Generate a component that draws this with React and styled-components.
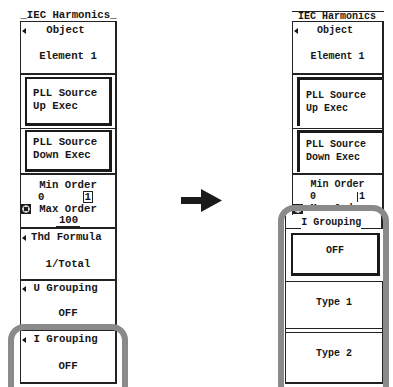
import React from "react";
import styled, { createGlobalStyle, css } from "styled-components";

const GlobalStyle = createGlobalStyle`
  html, body {
    margin: 0;
    background: #fff;
  }
  body {
    font-family: "Liberation Mono", "DejaVu Sans Mono", monospace;
    color: #161616;
  }
`;

const Stage = styled.div`
  position: relative;
  display: flex;
  align-items: flex-start;
  width: 393px;
  height: 387px;
  padding: 9px 0 0 20px;
  box-sizing: border-box;
  overflow: hidden;
`;

const Column = styled.div`
  position: relative;
  flex-shrink: 0;
  width: ${(p) => p.$width}px;
  margin-left: ${(p) => p.$offset || 0}px;
`;

const Panel = styled.div`
  display: flex;
  flex-direction: column;
  width: ${(p) => p.$width}px;
  margin-left: ${(p) => p.$inset || 0}px;
  font-size: ${(p) => p.$font}px;
  font-weight: bold;
`;

const PanelTitle = styled.div`
  box-sizing: border-box;
  height: ${(p) => (p.$boxed ? 10 : 12)}px;
  margin-top: ${(p) => (p.$boxed ? 2 : 0)}px;
  border-top: ${(p) => (p.$boxed ? "1px solid #222" : "none")};
  line-height: ${(p) => (p.$boxed ? 10 : 12)}px;
  text-align: ${(p) => (p.$boxed ? "right" : "center")};
  padding-right: ${(p) => (p.$boxed ? 8 : 0)}px;
  white-space: pre;
`;

const Section = styled.div`
  box-sizing: border-box;
  display: flex;
  flex-direction: column;
  height: ${(p) => p.$h}px;
  padding: ${(p) => p.$pad || "3px 0 0"};
  border-left: 1px solid #222;
  border-right: 2px solid #222;
  border-top: ${(p) => (p.$top ? "1px solid #222" : "none")};
  border-bottom: ${(p) => p.$bottom ?? 2}px solid #222;
`;

const LabelRow = styled.div`
  display: flex;
  align-items: center;
  height: 11px;
  line-height: 11px;
`;

const Caret = styled.span`
  display: flex;
  align-items: center;
  flex-shrink: 0;
  width: 10px;
  height: 11px;
  &::before {
    content: "";
    margin-left: 1px;
    border-top: 3.5px solid transparent;
    border-bottom: 3.5px solid transparent;
    border-right: 4px solid #161616;
  }
`;

const LabelText = styled.span`
  flex: 1;
  text-align: center;
  padding-right: 15px;
  white-space: pre;
`;

const Value = styled.div`
  margin-top: ${(p) => p.$gap}px;
  line-height: 11px;
  text-align: center;
  white-space: pre;
`;

const ExecButton = styled.div`
  flex: 1;
  box-sizing: border-box;
  display: flex;
  flex-direction: column;
  justify-content: center;
  padding: 0 0 3px 6px;
  line-height: 13px;
  white-space: pre;
  ${(p) =>
    p.$raised
      ? css`
          border-top: 3px solid #1a1a1a;
          border-left: 3px solid #1a1a1a;
          margin-right: -3px;
        `
      : css`
          border: 2px solid #1a1a1a;
          border-right-width: 3px;
          border-bottom-width: 3px;
        `}
`;

const OrderRow = styled.div`
  display: flex;
  align-items: center;
  height: 12.5px;
  line-height: 12px;
  justify-content: ${(p) => (p.$spread ? "space-between" : "center")};
  padding: ${(p) => p.$pad || "0"};
`;

const OrderText = styled.span`
  flex: 1;
  text-align: center;
  padding-right: ${(p) => p.$shift || 0}px;
`;

const Cursor = styled.span`
  line-height: 10px;
  padding: 0 1px;
  border-left: 1px solid #222;
  border-right: ${(p) => (p.$open ? "none" : "1px solid #222")};
  border-top: ${(p) => (p.$open ? "none" : "1px solid #222")};
  border-bottom: ${(p) => (p.$open ? "none" : "1px solid #222")};
`;

const Underlined = styled.span`
  border-bottom: 1px solid #222;
  padding: 0 2px 0 3px;
  line-height: 11px;
`;

const Popup = styled.div`
  position: absolute;
  left: 0;
  top: 206px;
  width: 100px;
  display: flex;
  flex-direction: column;
  background: #fff;
  font-size: 10px;
  font-weight: bold;
`;

const PopupTitle = styled.div`
  display: flex;
  align-items: flex-end;
  height: 14px;
  line-height: 12px;
  white-space: pre;
`;

const Rule = styled.span`
  flex: ${(p) => p.$grow};
  align-self: stretch;
  border-bottom: 1px solid #222;
  border-left: ${(p) => (p.$edge === "left" ? "1px solid #222" : "none")};
  border-right: ${(p) => (p.$edge === "right" ? "2px solid #222" : "none")};
  margin-right: ${(p) => (p.$edge === "right" ? 2 : 0)}px;
`;

const Option = styled.div`
  box-sizing: border-box;
  display: flex;
  flex-direction: column;
  height: ${(p) => p.$h}px;
  padding: ${(p) => p.$pad || "0"};
  border-left: 1px solid #222;
  border-right: ${(p) => (p.$thick ? 3 : 1)}px solid #222;
  border-bottom: ${(p) => p.$bottom ?? 2}px solid #222;
  box-shadow: ${(p) => (p.$double ? "inset 0 -3px 0 #fff, inset 0 -4px 0 #222" : "none")};
`;

const OptionText = styled.div`
  padding-top: ${(p) => p.$top}px;
  line-height: 11px;
  text-align: center;
  white-space: pre;
`;

const SelectedBox = styled.div`
  flex: 1;
  border: 2px solid #1a1a1a;
  border-right-width: 3px;
  border-bottom-width: 3px;
`;

const Highlight = styled.div`
  position: absolute;
  left: ${(p) => p.$x}px;
  top: ${(p) => p.$y}px;
  width: ${(p) => p.$w}px;
  height: ${(p) => p.$h}px;
  box-sizing: border-box;
  border: 6px solid #8a8a8a;
  border-radius: 16px;
  pointer-events: none;
`;

const ArrowWrap = styled.div`
  flex-shrink: 0;
  width: 41px;
  height: 23px;
  margin: 180px 0 0 64px;
`;

const JogIcon = () => (
  <svg width="10" height="10" viewBox="0 0 10 10" style={{ flexShrink: 0 }}>
    <rect x="0" y="0" width="10" height="10" fill="#1e1e1e" />
    <circle cx="5" cy="5" r="3.3" fill="none" stroke="#fff" strokeWidth="1" />
    <path d="M5 1.5L6.3 3H3.7Z M5 8.5L6.3 7H3.7Z M1.5 5L3 3.7V6.3Z M8.5 5L7 3.7V6.3Z" fill="#fff" />
  </svg>
);

function SettingsPanel({ raised, font, width, inset, titled, partial }) {
  return (
    <Panel $width={width} $inset={inset} $font={font}>
      <PanelTitle $boxed={raised}>{titled}</PanelTitle>
      <Section $h={54} $top>
        <LabelRow>
          <Caret />
          <LabelText>Object</LabelText>
        </LabelRow>
        <Value $gap={15}>Element 1</Value>
      </Section>
      <Section $h={54} $bottom={1} $pad="2px 3px 2px 4px">
        <ExecButton $raised={raised}>
          <span>PLL Source</span>
          <span>Up Exec</span>
        </ExecButton>
      </Section>
      <Section $h={46} $pad="1px 3px 1px 4px">
        <ExecButton $raised={raised}>
          <span>PLL Source</span>
          <span>Down Exec</span>
        </ExecButton>
      </Section>
      <Section $h={partial ? 40 : 54} $pad="4px 0 0" $bottom={partial ? 0 : 2}>
        <OrderRow>Min Order</OrderRow>
        <OrderRow $spread $pad={raised ? "0 16px 0 17px" : "0 22px 0 17px"}>
          <span>0</span>
          <Cursor $open={raised}>1</Cursor>
        </OrderRow>
        <OrderRow>
          <JogIcon />
          <OrderText $shift={10}>Max Order</OrderText>
        </OrderRow>
        {!partial && (
          <OrderRow>
            <Underlined>100</Underlined>
          </OrderRow>
        )}
      </Section>
      {!partial && (
        <>
          <Section $h={52}>
            <LabelRow>
              <Caret />
              <LabelText>Thd Formula</LabelText>
            </LabelRow>
            <Value $gap={16}>1/Total</Value>
          </Section>
          <Section $h={50} $pad="2px 0 0">
            <LabelRow>
              <Caret />
              <LabelText>U Grouping</LabelText>
            </LabelRow>
            <Value $gap={14}>OFF</Value>
          </Section>
          <Section $h={53}>
            <LabelRow>
              <Caret />
              <LabelText>I Grouping</LabelText>
            </LabelRow>
            <Value $gap={16}>OFF</Value>
          </Section>
        </>
      )}
    </Panel>
  );
}

export default function App() {
  return (
    <>
      <GlobalStyle />
      <Stage>
        <Column $width={97}>
          <SettingsPanel font={10.7} width={97} titled="_IEC Harmonics_" />
          <Highlight $x={-12} $y={315} $w={120} $h={82} />
        </Column>

        <ArrowWrap>
          <svg width="41" height="23" viewBox="0 0 41 23">
            <path d="M0 8H20V0L41 11.5L20 23V15H0Z" fill="#1a1a1a" />
          </svg>
        </ArrowWrap>

        <Column $width={100} $offset={63}>
          <SettingsPanel raised partial font={10} width={92} inset={7} titled="IEC Harmonics" />
          <Popup>
            <PopupTitle>
              <Rule $grow={13} $edge="left" />
              <span>I Grouping</span>
              <Rule $grow={17} $edge="right" />
            </PopupTitle>
            <Option $h={53} $bottom={1} $pad="4px 4px 5px 5px">
              <SelectedBox>
                <OptionText $top={10}>OFF</OptionText>
              </SelectedBox>
            </Option>
            <Option $h={51} $thick $bottom={1} $double>
              <OptionText $top={15}>Type 1</OptionText>
            </Option>
            <Option $h={51} $thick>
              <OptionText $top={15}>Type 2</OptionText>
            </Option>
          </Popup>
          <Highlight $x={-7} $y={196} $w={111} $h={196} />
        </Column>
      </Stage>
    </>
  );
}
